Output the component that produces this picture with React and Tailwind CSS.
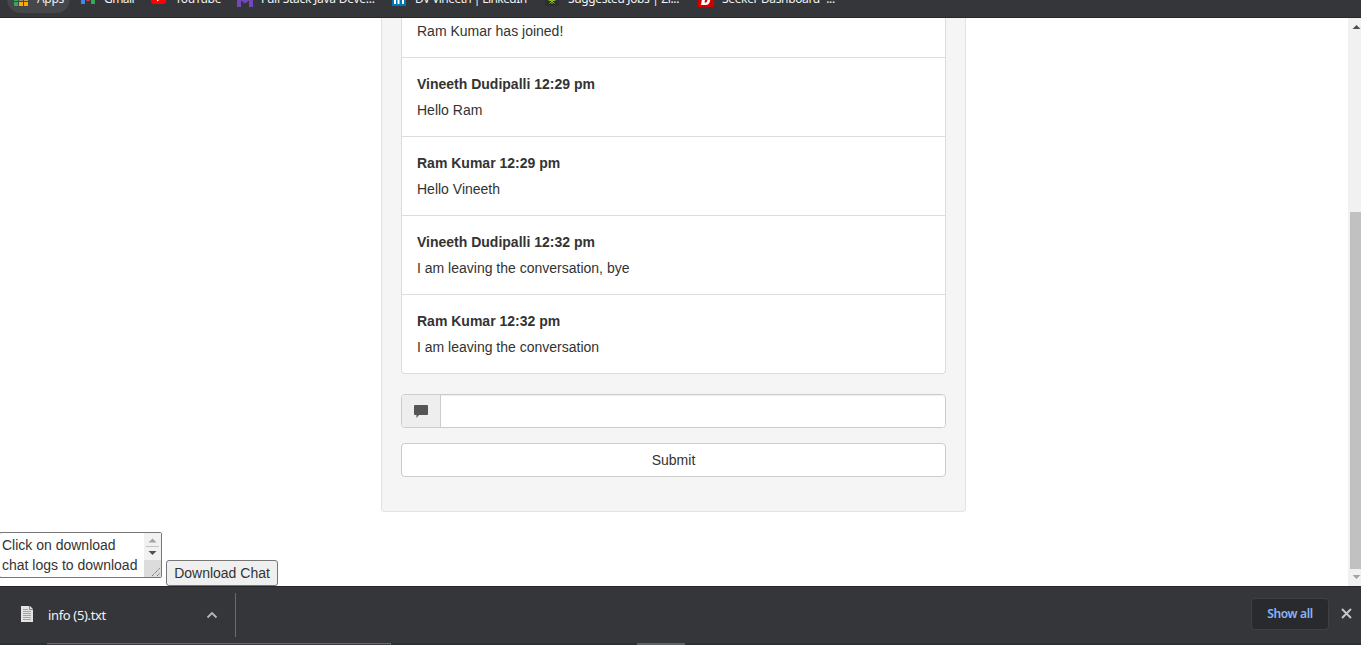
import React from 'react';

const messages = [
  { who: 'Vineeth Dudipalli 12:29 pm', text: 'Hello Ram' },
  { who: 'Ram Kumar 12:29 pm', text: 'Hello Vineeth' },
  { who: 'Vineeth Dudipalli 12:32 pm', text: 'I am leaving the conversation, bye' },
  { who: 'Ram Kumar 12:32 pm', text: 'I am leaving the conversation' },
];

function AppsIcon() {
  const colors = ['#ea4335', '#ea4335', '#fbbc04', '#34a853', '#8a8f94', '#c9a24a', '#34a853', '#fbab08', '#fbab08'];
  return (
    <svg width="14" height="14" viewBox="0 0 14 14" shapeRendering="crispEdges">
      {colors.map((c, i) => (
        <rect key={i} x={(i % 3) * 5} y={Math.floor(i / 3) * 5} width="4" height="4" fill={c} />
      ))}
    </svg>
  );
}

function GmailIcon() {
  return (
    <svg width="14" height="12" viewBox="0 0 14 12">
      <path d="M0 2h4v9H0z" fill="#4285f4" />
      <path d="M10 2h4v9h-4z" fill="#34a853" />
      <path d="M0 1l7 5 7-5v2.500l-7 5-7-5z" fill="#ea4335" />
    </svg>
  );
}

function YouTubeIcon() {
  return (
    <svg width="15" height="12" viewBox="0 0 15 12">
      <rect width="15" height="11" rx="3" fill="#ff0000" />
      <path d="M6 3l4.500 2.500L6 8.500z" fill="#fff" />
    </svg>
  );
}

function MIcon() {
  return (
    <svg width="16" height="16" viewBox="0 0 16 16">
      <path d="M0 1h4l4 5 4-5h4v15h-4V9.500L8 12.500 4 9.500V16H0z" fill="#7248b9" />
    </svg>
  );
}

function LinkedInIcon() {
  return (
    <svg width="14" height="14" viewBox="0 0 14 14">
      <rect width="14" height="14" fill="#0077b5" />
      <path d="M2 5h2v7H2zM2 2h2v2H2zM5.500 5h2v1c1-1.500 4.500-1.500 4.500 1.500V12h-2V8c0-1.500-2.500-1.500-2.500 0v4h-2z" fill="#fff" />
    </svg>
  );
}

function PlantIcon() {
  return (
    <svg width="14" height="14" viewBox="0 0 14 14">
      <rect width="14" height="14" fill="#2b3033" />
      <path d="M7 1v11M3.500 8.500h7M4.500 11.500L7 9l2.500 2.500M4 3l3 3 3-3" stroke="#8cb52b" strokeWidth="1" fill="none" />
    </svg>
  );
}

function DiceIcon() {
  return (
    <svg width="16" height="16" viewBox="0 0 16 16">
      <rect width="16" height="16" fill="#d40000" />
      <path fillRule="evenodd" d="M5 2h5q3 0 2.500 4l-.5 4q-.8 4-4 4H3zM8 5L6.500 11.500H8Q9.300 11 9.500 8 9.700 5 8 5z" fill="#fff" />
    </svg>
  );
}

function Bookmark({ slot, iconBox, icon, label, spacing }) {
  return (
    <div className={`flex shrink-0 items-center ${slot}`}>
      <span className={`flex shrink-0 ${iconBox}`}>{icon}</span>
      <span className={`whitespace-nowrap ${spacing}`}>{label}</span>
    </div>
  );
}

function BookmarksBar() {
  return (
    <div className="h-[18px] shrink-0 overflow-hidden border-b border-[#26272a] bg-[#35363a]">
      <div className="-mt-[15px] flex h-7 pl-[7px] font-['Noto_Sans',sans-serif] text-[12px] leading-7 text-[#f1f3f4]">
        <Bookmark slot="w-[63px] mr-[11px] pl-[7px] rounded-full bg-[#46474b]" iconBox="w-[23px]" icon={<AppsIcon />} label="Apps" spacing="tracking-[-0.3px]" />
        <Bookmark slot="w-[70px]" iconBox="w-[23px]" icon={<GmailIcon />} label="Gmail" spacing="tracking-[-0.6px]" />
        <Bookmark slot="w-[86px]" iconBox="w-[24px]" icon={<YouTubeIcon />} label="YouTube" spacing="tracking-[-0.35px]" />
        <Bookmark slot="w-[155px]" iconBox="w-[24px]" icon={<MIcon />} label="Full Stack Java Deve..." spacing="tracking-[-0.26px]" />
        <Bookmark slot="w-[153px]" iconBox="w-[23px]" icon={<LinkedInIcon />} label="DV Vineeth | LinkedIn" spacing="tracking-[-0.58px]" />
        <Bookmark slot="w-[153px]" iconBox="w-[23px]" icon={<PlantIcon />} label="Suggested Jobs | Zi..." spacing="tracking-[-0.36px]" />
        <Bookmark slot="w-[160px]" iconBox="w-[24px]" icon={<DiceIcon />} label="Seeker Dashboard -..." spacing="tracking-[-0.35px]" />
      </div>
    </div>
  );
}

function Chat() {
  return (
    <section className="ml-[381px] h-[494px] w-[585px] shrink-0 rounded-b border border-t-0 border-[#e3e3e3] bg-[#f5f5f5] px-[19px]">
      <ul className="rounded-b border border-t-0 border-[#ddd] bg-white">
        <li className="px-[15px] pt-[3px] pb-4">Ram Kumar has joined!</li>
        {messages.map((m) => (
          <li key={m.who} className="flex flex-col gap-1.5 border-t border-[#ddd] px-[15px] py-4">
            <strong className="font-bold">{m.who}</strong>
            <p>{m.text}</p>
          </li>
        ))}
      </ul>
      <div className="mt-5 flex h-[34px] rounded border border-[#ccc] bg-white">
        <div className="flex w-[39px] items-center justify-center rounded-l-[3px] border-r border-[#ccc] bg-[#eee]">
          <svg width="14" height="14" viewBox="0 0 14 14">
            <path d="M1 1h12q1 0 1 1v8q0 1-1 1H5L2.500 14V11H1Q0 11 0 10V2Q0 1 1 1z" fill="#555" />
          </svg>
        </div>
        <input aria-label="Message" className="min-w-0 flex-1 rounded-r-[3px] bg-white px-3 shadow-[inset_0_1px_1px_rgba(0,0,0,0.075)] outline-none" />
      </div>
      <button className="mt-[15px] block h-[34px] w-full rounded border border-[#ccc] bg-white text-center">Submit</button>
    </section>
  );
}

function DownloadControls() {
  return (
    <div className="mt-5 flex items-start">
      <div className="-ml-px flex h-[46px] w-[163px] rounded-[2px] border border-[#767676] bg-white">
        <div className="flex-1 overflow-hidden pt-0.5 pl-0.5 whitespace-nowrap">
          <p>Click on download</p>
          <p>chat logs to download</p>
        </div>
        <svg width="17" height="44" viewBox="0 0 17 44">
          <path d="M0 0h17v44H0z" fill="#f1f1f1" />
          <path d="M0 27h17v17H0z" fill="#dcdcdc" />
          <path d="M4.500 9.500h8l-4-4z" fill="#a3a3a3" />
          <path d="M2 13.500h13" stroke="#c1c1c1" />
          <path d="M4.500 18h8l-4 4z" fill="#505050" />
          <path d="M8 43l8-8M13 43l3-3" stroke="#777" fill="none" strokeDasharray="1.500 .4" />
        </svg>
      </div>
      <button className="mt-7 ml-1 h-[26px] w-[112px] rounded-[3px] border border-[#767676] bg-[#efefef] text-center whitespace-nowrap">Download Chat</button>
    </div>
  );
}

function PageScrollbar() {
  return (
    <div className="flex w-[13px] shrink-0 flex-col overflow-hidden bg-[#f1f1f1]">
      <svg width="13" height="17" viewBox="0 0 13 17"><path d="M4.500 11h8l-4-4z" fill="#505050" /></svg>
      <div className="mt-[177px] ml-[2px] h-[357px] bg-[#c1c1c1]" />
      <svg width="13" height="17" viewBox="0 0 13 17"><path d="M4.500 6h8l-4 4z" fill="#a3a3a3" /></svg>
    </div>
  );
}

function DownloadShelf() {
  return (
    <footer className="flex h-[59px] shrink-0 flex-col border-t border-[#26272a] bg-[#35363a] font-['Noto_Sans',sans-serif] text-[12px] text-[#f1f3f4]">
      <div className="flex h-[56px] items-start">
        <div className="mt-[6px] flex h-[44px] w-[236px] shrink-0 items-center border-r border-[#6a6b6e] pl-[21px]">
          <svg className="mb-0.5" width="12" height="16" viewBox="0 0 12 16">
            <path d="M0 0h9l3 3v13H0z" fill="#e3e3e3" />
            <path d="M8.500 0v3.500H12" fill="none" stroke="#888" />
            <path d="M2 3.500h5M2 5.500h8M2 7.500h8M2 9.500h8M2 11.500h8M2 13.500h8" stroke="#888" strokeWidth=".7" />
          </svg>
          <span className="ml-[15px] w-[158px] pt-0.5 text-[13px] tracking-[-0.35px] whitespace-nowrap">info (5).txt</span>
          <svg width="12" height="8" viewBox="0 0 12 8"><path d="M1.500 6.500L6 2l4.500 4.500" fill="none" stroke="#b6b7b9" strokeWidth="1.800" /></svg>
        </div>
        <button className="mt-[11px] ml-auto h-[32px] w-[78px] shrink-0 rounded border border-[#3f4044] bg-[#292a2d] font-semibold tracking-[-0.35px] text-[#8ab4f8]">Show all</button>
        <svg className="mt-[21px] mr-[9px] ml-3 shrink-0" width="11" height="11" viewBox="0 0 11 11"><path d="M1 1l9 9M10 1l-9 9" stroke="#c6c7c9" strokeWidth="1.900" /></svg>
      </div>
      <div className="flex h-[2px] bg-[#26323a]">
        <div className="ml-[47px] h-[2px] w-[344px] border-t border-r border-[#68696b] bg-[#3b3b3d]" />
        <div className="ml-[246px] h-[2px] w-[48px] bg-[#5b626a]" />
      </div>
    </footer>
  );
}

export default function App() {
  return (
    <div className="flex h-[645px] w-[1361px] flex-col overflow-hidden bg-white">
      <BookmarksBar />
      <div className="flex h-[568px] shrink-0">
        <main className="flex min-w-0 flex-1 flex-col font-['Liberation_Sans',Arial,sans-serif] text-[14px] leading-5 text-[#333]">
          <Chat />
          <DownloadControls />
        </main>
        <PageScrollbar />
      </div>
      <DownloadShelf />
    </div>
  );
}
